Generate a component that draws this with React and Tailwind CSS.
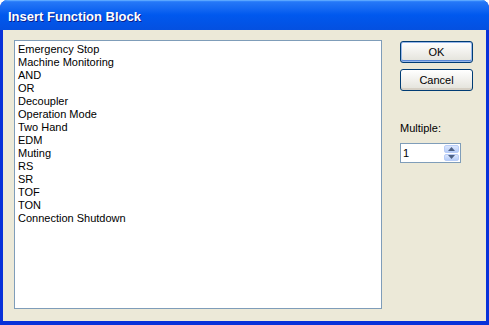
import React from 'react';

const items = [
  'Emergency Stop',
  'Machine Monitoring',
  'AND',
  'OR',
  'Decoupler',
  'Operation Mode',
  'Two Hand',
  'EDM',
  'Muting',
  'RS',
  'SR',
  'TOF',
  'TON',
  'Connection Shutdown',
];

const XpButton = ({ children, isDefault }) => (
  <button
    className={
      isDefault
        ? 'w-[73px] h-[22px] rounded-[3px] border border-[#003c74] bg-gradient-to-b from-[#ffffff] to-[#e3e2da] text-[11px] text-black shadow-[inset_0_0_0_1px_#98b8ea,inset_0_-1px_0_1px_#5b89d6]'
        : 'w-[73px] h-[22px] rounded-[3px] border border-[#003c74] bg-gradient-to-b from-[#ffffff] to-[#e3e2da] text-[11px] text-black shadow-[inset_0_-2px_0_#d6d0c5]'
    }
  >
    {children}
  </button>
);

const App = () => {
  return (
    <div
      className="w-[489px] h-[325px] flex flex-col bg-[#0831d9] rounded-t-[8px] overflow-hidden"
      style={{ fontFamily: '"Liberation Sans", Arial, sans-serif' }}
    >
      {/* Title bar */}
      <div className="h-[30px] shrink-0 flex items-center pl-[8px] pt-[2px] bg-gradient-to-b from-[#2a7cf8] via-[#0058ee] to-[#0450e0] shadow-[inset_0_1px_0_#5aa6ff,inset_0_2px_0_#2f82fb]">
        <span className="text-white font-bold text-[13px] leading-none [text-shadow:1px_1px_0_#0a1e8c]">
          Insert Function Block
        </span>
      </div>

      {/* Body */}
      <div className="flex-1 mx-[3px] mb-[4px] bg-[#ece9d8] flex pl-[11px] pt-[10px] pb-[12px]">
        <div className="w-[368px] h-[269px] bg-white border border-[#7f9db9] px-[3px] pt-[2px] text-[11px] leading-[13px] text-black">
          {items.map((item) => (
            <div key={item}>{item}</div>
          ))}
        </div>

        <div className="ml-[18px] pt-[1px] flex flex-col">
          <XpButton isDefault>OK</XpButton>
          <div className="h-[6px]" />
          <XpButton>Cancel</XpButton>
          <div className="text-[11px] text-black mt-[31px] leading-[13px]">Multiple:</div>
          <div className="mt-[8px] w-[61px] h-[20px] bg-white border border-[#7f9db9] flex items-center">
            <span className="flex-1 pl-[2px] text-[11px] text-black">1</span>
            <div className="w-[15px] h-[16px] mr-[1px] flex flex-col gap-[1px]">
              <div className="flex-1 rounded-[2px] bg-gradient-to-b from-[#dce7fd] to-[#b6cdf9] border border-[#b9cdf7] flex items-center justify-center">
                <svg width="7" height="4" viewBox="0 0 7 4"><path d="M0 4 L3.5 0 L7 4 Z" fill="#4d6185" /></svg>
              </div>
              <div className="flex-1 rounded-[2px] bg-gradient-to-b from-[#dce7fd] to-[#b6cdf9] border border-[#b9cdf7] flex items-center justify-center">
                <svg width="7" height="4" viewBox="0 0 7 4"><path d="M0 0 L3.5 4 L7 0 Z" fill="#4d6185" /></svg>
              </div>
            </div>
          </div>
        </div>
      </div>
    </div>
  );
};

export default App;
